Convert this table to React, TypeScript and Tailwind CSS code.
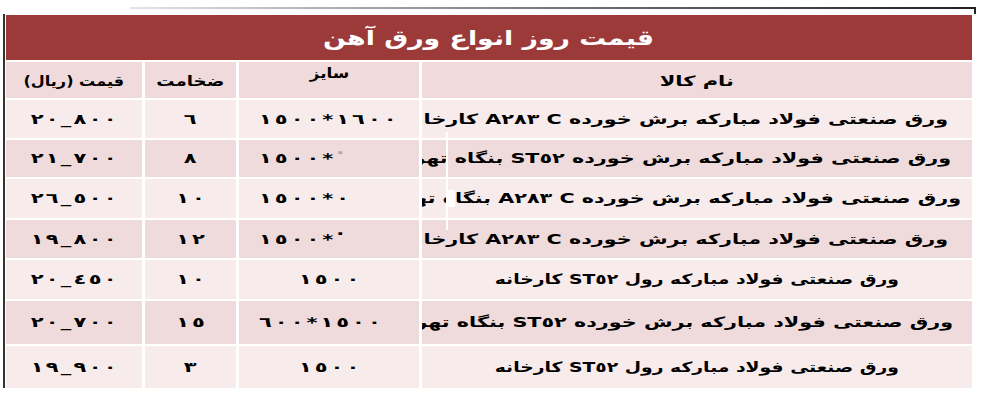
import React from "react";

interface Row {
  name: string;
  overflow: boolean;
  namePad: string;
  size: string;
  sizeTail?: React.ReactNode;
  sizeStart: boolean;
  thickness: string;
  price: string;
  tone: "light" | "dark";
}

const rows: Row[] = [
  {
    name: "ورق صنعتی فولاد مبارکه برش خورده C\u200f A٢٨٣ کارخانه",
    overflow: true,
    namePad: "pr-[24px]",
    size: "١٥٠٠*١٦٠٠",
    sizeStart: true,
    thickness: "٦",
    price: "٢٠_٨٠٠",
    tone: "light",
  },
  {
    name: "ورق صنعتی فولاد مبارکه برش خورده ST٥٢ بنگاه تهران",
    overflow: true,
    namePad: "pr-[21px]",
    size: "١٥٠٠*",
    sizeTail: <span className="relative -top-[5px] text-[#aaa]">·</span>,
    sizeStart: true,
    thickness: "٨",
    price: "٢١_٧٠٠",
    tone: "dark",
  },
  {
    name: "ورق صنعتی فولاد مبارکه برش خورده C\u200f A٢٨٣ بنگاه تهران",
    overflow: true,
    namePad: "pr-[11px]",
    size: "١٥٠٠*٠",
    sizeStart: true,
    thickness: "١٠",
    price: "٢٦_٥٠٠",
    tone: "light",
  },
  {
    name: "ورق صنعتی فولاد مبارکه برش خورده C\u200f A٢٨٣ کارخانه",
    overflow: true,
    namePad: "pr-[24px]",
    size: "١٥٠٠*",
    sizeTail: <span className="relative -top-[5px]">·</span>,
    sizeStart: true,
    thickness: "١٢",
    price: "١٩_٨٠٠",
    tone: "dark",
  },
  {
    name: "ورق صنعتی فولاد مبارکه رول ST٥٢ کارخانه",
    overflow: false,
    namePad: "pr-0",
    size: "١٥٠٠",
    sizeStart: false,
    thickness: "١٠",
    price: "٢٠_٤٥٠",
    tone: "light",
  },
  {
    name: "ورق صنعتی فولاد مبارکه برش خورده ST٥٢ بنگاه تهران",
    overflow: true,
    namePad: "pr-[19px]",
    size: "٦٠٠*١٥٠٠",
    sizeStart: true,
    thickness: "١٥",
    price: "٢٠_٧٠٠",
    tone: "dark",
  },
  {
    name: "ورق صنعتی فولاد مبارکه رول ST٥٢ کارخانه",
    overflow: false,
    namePad: "pr-0",
    size: "١٥٠٠",
    sizeStart: false,
    thickness: "٣",
    price: "١٩_٩٠٠",
    tone: "light",
  },
];

const toneBg = {
  light: "bg-[#f7ebec]",
  dark: "bg-[#f0dbdc]",
  head: "bg-[#f0dadb]",
};

function Cell({
  tone,
  className = "",
  children,
}: {
  tone: "light" | "dark" | "head";
  className?: string;
  children?: React.ReactNode;
}) {
  return (
    <div className={`${toneBg[tone]} flex items-center overflow-hidden whitespace-nowrap ${className}`}>
      {children}
    </div>
  );
}

// the source picture is stretched sideways, so glyphs get a horizontal scale
function Wide({
  origin = "origin-center",
  scale = "scale-x-[1.5]",
  children,
}: {
  origin?: string;
  scale?: string;
  children: React.ReactNode;
}) {
  return <span className={`inline-block shrink-0 ${scale} ${origin}`}>{children}</span>;
}

// letter-spacing is ignored for Arabic digits, so space them one by one
function Digits({ text, gap, tail }: { text: string; gap: string; tail?: React.ReactNode }) {
  return (
    <span dir="ltr" className={`inline-flex ${gap}`}>
      {Array.from(text).map((ch, i) => (
        <span key={i}>{ch}</span>
      ))}
      {tail}
    </span>
  );
}

export default function App() {
  return (
    <div
      className="relative w-[982px] h-[400px] bg-white pt-[7px] text-black font-bold"
      style={{ fontFamily: '"DejaVu Sans", sans-serif' }}
    >
      {/* top rule */}
      <div className="ml-[130px] w-[846px] h-[7px] flex items-start">
        <div className="flex-1 h-[2px] bg-gradient-to-r from-[#e5e5e5] via-[#777] to-[#222]" />
        <div className="w-[2px] h-[7px] bg-[#222]" />
      </div>

      <div className="ml-[3px] w-[969px] border-l-2 border-[#333] pl-px pt-px">
        <div
          dir="rtl"
          className="h-[45px] bg-[#9c3a3a] flex items-center justify-center text-white text-[20px]"
        >
          <span className="inline-block scale-x-[1.34]">قیمت روز انواع ورق آهن</span>
        </div>

        <div
          dir="ltr"
          className="mt-[2px] grid grid-cols-[136px_91px_180px_1fr] grid-rows-[36px_38px_37px_39px_38px_39px_43px_42px] gap-x-[3px] gap-y-[2px] text-[14px]"
        >
          <Cell tone="head" className="justify-center pt-[2px]">
            <Wide scale="scale-x-[1.15]">
              <span dir="rtl">قیمت (ریال)</span>
            </Wide>
          </Cell>
          <Cell tone="head" className="justify-center pt-[2px]">
            <Wide scale="scale-x-[1.3]">
              <span dir="rtl">ضخامت</span>
            </Wide>
          </Cell>
          <Cell tone="head" className="justify-center !items-start pt-[1px]">
            <Wide scale="scale-x-[1.2]">
              <span dir="rtl">سایز</span>
            </Wide>
          </Cell>
          <Cell tone="head" className="justify-center pt-[2px]">
            <Wide>
              <span dir="rtl">نام کالا</span>
            </Wide>
          </Cell>

          {rows.map((r, i) => (
            <React.Fragment key={i}>
              <Cell tone={r.tone} className="justify-center">
                <Wide>
                  <Digits text={r.price} gap="gap-[1.5px]" />
                </Wide>
              </Cell>
              <Cell tone={r.tone} className="justify-center">
                <Wide>
                  <Digits text={r.thickness} gap="gap-[2px]" />
                </Wide>
              </Cell>
              <Cell
                tone={r.tone}
                className={r.sizeStart ? "justify-start pl-[20px]" : "justify-center"}
              >
                <Wide origin={r.sizeStart ? "origin-left" : "origin-center"}>
                  <Digits text={r.size} gap="gap-[2px]" tail={r.sizeTail} />
                </Wide>
              </Cell>
              <div
                dir="rtl"
                className={`${toneBg[r.tone]} flex items-center overflow-hidden whitespace-nowrap ${
                  r.overflow ? "justify-start" : "justify-center"
                } ${r.namePad}`}
              >
                <Wide
                  scale={r.overflow ? "scale-x-[1.48]" : "scale-x-[1.34]"}
                  origin={r.overflow ? "origin-right" : "origin-center"}
                >
                  {r.name}
                </Wide>
              </div>
            </React.Fragment>
          ))}
        </div>
      </div>

      {/* scan artefact over the name column */}
      <div className="absolute left-[446px] top-[132px] w-[2px] h-[98px] bg-white" />
      <div className="absolute left-[448px] top-[190px] w-[7px] h-[17px] bg-white" />
    </div>
  );
}
